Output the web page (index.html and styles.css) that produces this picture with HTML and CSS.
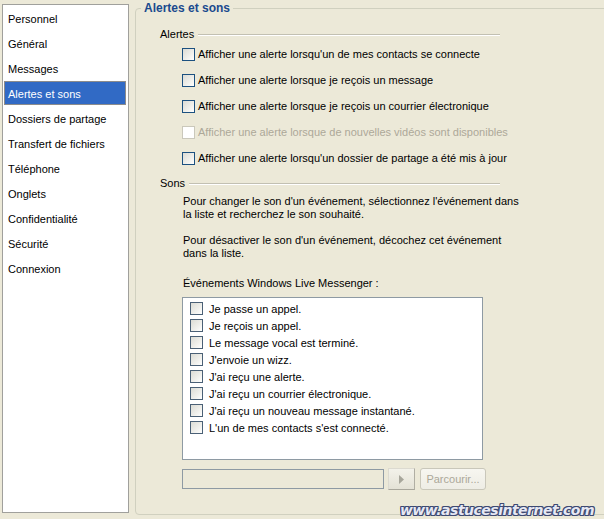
FILE: index.html
```html
<!DOCTYPE html>
<html lang="fr">
<head>
<meta charset="utf-8">
<title>Options - Alertes et sons</title>
<link rel="stylesheet" href="styles.css">
</head>
<body>
<div class="window">
  <ul class="sidebar">
    <li class="nav-item">Personnel</li>
    <li class="nav-item">Général</li>
    <li class="nav-item">Messages</li>
    <li class="nav-item selected">Alertes et sons</li>
    <li class="nav-item">Dossiers de partage</li>
    <li class="nav-item">Transfert de fichiers</li>
    <li class="nav-item">Téléphone</li>
    <li class="nav-item">Onglets</li>
    <li class="nav-item">Confidentialité</li>
    <li class="nav-item">Sécurité</li>
    <li class="nav-item">Connexion</li>
  </ul>
  <section class="group">
    <div class="group-title">Alertes et sons</div>
    <div class="section-head first"><span>Alertes</span><span class="rule"></span></div>
    <div class="opt"><span class="cb"></span>Afficher une alerte lorsqu'un de mes contacts se connecte</div>
    <div class="opt"><span class="cb"></span>Afficher une alerte lorsque je reçois un message</div>
    <div class="opt"><span class="cb"></span>Afficher une alerte lorsque je reçois un courrier électronique</div>
    <div class="opt disabled"><span class="cb"></span>Afficher une alerte lorsque de nouvelles vidéos sont disponibles</div>
    <div class="opt"><span class="cb"></span>Afficher une alerte lorsqu'un dossier de partage a été mis à jour</div>
    <div class="section-head sons"><span>Sons</span><span class="rule"></span></div>
    <p class="para p1">Pour changer le son d'un événement, sélectionnez l'événement dans<br>la liste et recherchez le son souhaité.</p>
    <p class="para p2">Pour désactiver le son d'un événement, décochez cet événement<br>dans la liste.</p>
    <p class="para p3">Événements Windows Live Messenger :</p>
    <ul class="events">
      <li class="ev"><span class="cb"></span>Je passe un appel.</li>
      <li class="ev"><span class="cb"></span>Je reçois un appel.</li>
      <li class="ev"><span class="cb"></span>Le message vocal est terminé.</li>
      <li class="ev"><span class="cb"></span>J'envoie un wizz.</li>
      <li class="ev"><span class="cb"></span>J'ai reçu une alerte.</li>
      <li class="ev"><span class="cb"></span>J'ai reçu un courrier électronique.</li>
      <li class="ev"><span class="cb"></span>J'ai reçu un nouveau message instantané.</li>
      <li class="ev"><span class="cb"></span>L'un de mes contacts s'est connecté.</li>
    </ul>
    <div class="controls">
      <div class="field"></div>
      <div class="btn play"><svg width="5" height="9" viewBox="0 0 5 9"><path d="M0 0 L5 4.5 L0 9 Z" fill="#a7a69b"/></svg></div>
      <div class="btn browse">Parcourir...</div>
    </div>
  </section>
</div>
<div class="watermark">www.astucesinternet.com</div>
</body>
</html>
```
FILE: styles.css
```css
html, body {
  margin: 0;
  padding: 0;
}
body {
  width: 604px;
  height: 519px;
  overflow: hidden;
  background: #ece9d8;
  font-family: "Liberation Sans", Arial, sans-serif;
  font-size: 11px;
  color: #000;
  position: relative;
}
.window {
  display: flex;
  align-items: flex-start;
  padding: 4px 0 0 2px;
}
.sidebar {
  list-style: none;
  margin: 0;
  padding: 1px 0 0 0;
  box-sizing: border-box;
  width: 127px;
  height: 509px;
  flex: none;
  background: #fff;
  border: 1px solid #a0a09c;
}
.nav-item {
  box-sizing: border-box;
  height: 24px;
  line-height: 20px;
  padding: 2px 0 0 3px;
  margin: 0 2px 1px 1px;
  border: 1px solid transparent;
  white-space: nowrap;
}
.nav-item.selected {
  background: #316ac5;
  color: #fff;
  border-color: #8c8c8c;
}
.group {
  box-sizing: border-box;
  margin: 4px 0 0 6px;
  width: 480px;
  height: 507px;
  flex: none;
  border: 1px solid #d0d0bf;
  border-radius: 4px;
  padding-left: 24px;
}
.group-title {
  margin: -7px 0 0 -19px;
  padding: 0 3px;
  width: fit-content;
  background: #ece9d8;
  font-weight: bold;
  font-size: 12px;
  color: #1a4a8e;
  line-height: 13px;
}
.section-head {
  display: flex;
  align-items: center;
  width: 340px;
  line-height: 13px;
}
.section-head.first { margin-top: 13px; }
.section-head.sons { margin-top: 6px; }
.rule {
  flex: 1;
  margin-left: 4px;
  height: 0;
  border-top: 1px solid #c2c0b2;
  border-bottom: 1px solid #fff;
}
.opt {
  display: flex;
  align-items: center;
  height: 26px;
  padding-left: 22px;
  white-space: nowrap;
}
.opt .cb { margin-right: 3px; }
.opt.disabled { color: #aca899; }
.opt.disabled .cb {
  border-color: #cac8bb;
  background: #fff;
}
.cb {
  box-sizing: border-box;
  width: 13px;
  height: 13px;
  flex: none;
  border: 1px solid #1c5180;
  background: linear-gradient(135deg, #dcdcd5 0%, #f0f0ec 60%, #fff 100%);
}
.para {
  margin: 0;
  padding-left: 23px;
  line-height: 13px;
  white-space: nowrap;
}
.p1 { margin-top: 5px; }
.p2 { margin-top: 13px; }
.p3 { margin-top: 17px; }
.events {
  list-style: none;
  box-sizing: border-box;
  margin: 7px 0 0 22px;
  padding: 2px 0 0 7px;
  width: 301px;
  height: 163px;
  background: #fff;
  border: 1px solid #8e9aa3;
}
.ev {
  display: flex;
  align-items: center;
  height: 17px;
  white-space: nowrap;
}
.ev .cb {
  margin-right: 6px;
  border-color: #4a6076;
}
.controls {
  display: flex;
  align-items: center;
  margin: 8px 0 0 22px;
}
.field {
  box-sizing: border-box;
  width: 202px;
  height: 20px;
  border: 1px solid #8e9aa3;
  background: #ece9d8;
}
.btn {
  box-sizing: border-box;
  height: 22px;
  display: flex;
  align-items: center;
  justify-content: center;
  border: 1px solid #c9c7ba;
  border-radius: 3px;
  background: linear-gradient(#f7f6f0, #eeede5);
  color: #aca899;
}
.play {
  width: 27px;
  margin-left: 4px;
  border-color: #dcdad0 #b0aea3 #a9a79c #dcdad0;
  border-radius: 0;
  background: linear-gradient(#f3f2ea, #e4e2d6);
}
.browse {
  width: 66px;
  margin-left: 5px;
}
.watermark {
  position: absolute;
  right: 10px;
  bottom: 1px;
  font-family: "DejaVu Sans", sans-serif;
  font-weight: bold;
  font-style: italic;
  font-size: 14px;
  line-height: 16px;
  letter-spacing: -0.5px;
  color: #e6e8f4;
  text-shadow: 1px 0 0 #3e4a72, -1px 0 0 #3e4a72, 0 1px 0 #3e4a72, 0 -1px 0 #3e4a72, 1px 1px 0 #3e4a72, -1px -1px 0 #3e4a72, 1px -1px 0 #3e4a72, -1px 1px 0 #3e4a72;
}
```
